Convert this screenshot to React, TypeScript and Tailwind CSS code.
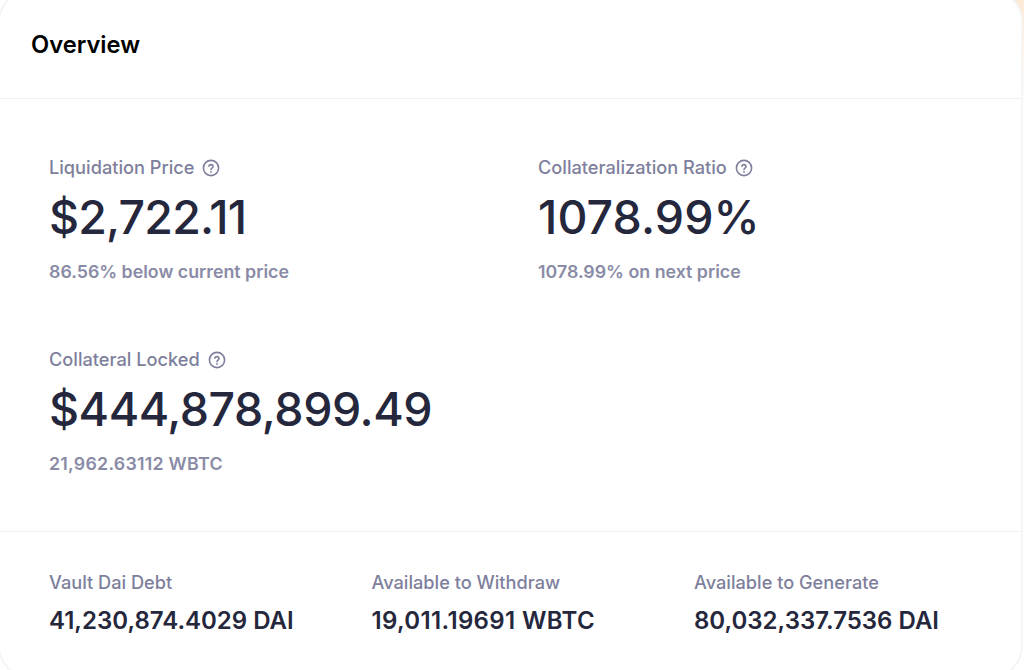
const font = { fontFamily: "Inter, sans-serif" }

function HelpIcon() {
  return (
    <svg viewBox="0 0 18 18" fill="none" className="w-[18px] h-[18px] text-[#7e7f9c]" aria-hidden>
      <circle cx="9" cy="9" r="7.6" stroke="currentColor" strokeWidth="1.6" />
      <path d="M6.9 7.1a2.15 2.15 0 0 1 4.2.5c0 1.4-2.1 1.8-2.1 3" stroke="currentColor" strokeWidth="1.6" strokeLinecap="round" />
      <circle cx="9" cy="12.9" r="0.95" fill="currentColor" />
    </svg>
  )
}

type Stat = { label: string; value: string; note: string; tracking: string; noteTracking: string }

const stats: Stat[] = [
  { label: "Liquidation Price", value: "$2,722.11", note: "86.56% below current price", tracking: "tracking-[-0.8px]", noteTracking: "tracking-[0px]" },
  { label: "Collateralization Ratio", value: "1078.99%", note: "1078.99% on next price", tracking: "tracking-[0.1px]", noteTracking: "tracking-[0px]" },
  { label: "Collateral Locked", value: "$444,878,899.49", note: "21,962.63112 WBTC", tracking: "tracking-[-0.45px]", noteTracking: "tracking-[0.25px]" },
]

const totals = [
  { label: "Vault Dai Debt", value: "41,230,874.4029 DAI", tracking: "tracking-[0px]" },
  { label: "Available to Withdraw", value: "19,011.19691 WBTC", tracking: "tracking-[0.35px]" },
  { label: "Available to Generate", value: "80,032,337.7536 DAI", tracking: "tracking-[0px]" },
]

export default function App() {
  return (
    <div className="w-[1024px] h-[670px] overflow-hidden bg-gradient-to-bl from-[#fce9d5] to-[#ffffff] to-[8%]" style={font}>
      <div className="w-[1025px] h-[688px] -mt-[10px] -ml-[2px] rounded-[32px] border-2 border-[#f5f5f6] bg-white">
        {/* Header */}
        <div className="h-[107px] pb-[1px] px-[31px] flex items-center border-b border-[#eeeff1]">
          <h2 className="text-[23.7px] font-semibold text-black">Overview</h2>
        </div>

        {/* Main stats */}
        <div className="h-[433px] pl-[49px] pt-[57px] grid grid-cols-[489px_1fr] grid-rows-[192px_auto] border-b border-[#eeeff1]">
          {stats.map((stat) => (
            <div key={stat.label}>
              <div className="flex items-center gap-2 h-[24px] text-[18.2px] font-medium text-[#7e7f9c]">
                {stat.label}
                <HelpIcon />
              </div>
              <div className={`mt-[7px] h-[60px] leading-[60px] text-[46.5px] font-medium text-[#25273d] ${stat.tracking}`}>{stat.value}</div>
              <div className={`mt-[13px] text-[17.8px] leading-[24px] font-semibold text-[#8a8ba6] ${stat.noteTracking}`}>{stat.note}</div>
            </div>
          ))}
        </div>

        {/* Footer totals */}
        <div className="pl-[49px] pt-[38px] grid grid-cols-[322.5px_322.5px_1fr]">
          {totals.map((item) => (
            <div key={item.label}>
              <div className="text-[18.2px] leading-[24px] font-medium text-[#7e7f9c]">{item.label}</div>
              <div className={`mt-[12px] text-[24px] leading-[30px] font-semibold text-[#25273d] ${item.tracking}`}>{item.value}</div>
            </div>
          ))}
        </div>
      </div>
    </div>
  )
}
